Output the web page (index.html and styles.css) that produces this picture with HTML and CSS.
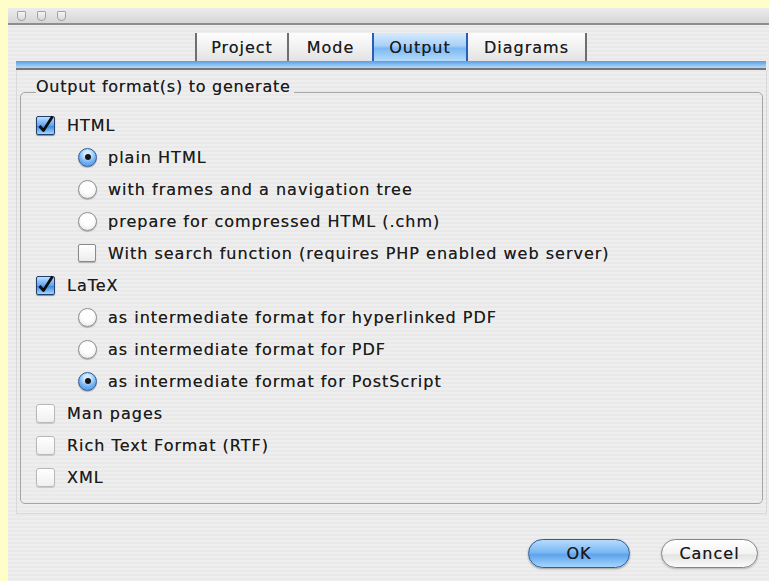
FILE: index.html
```html
<!DOCTYPE html>
<html>
<head>
<meta charset="utf-8">
<title>Doxygen Wizard</title>
<link rel="stylesheet" href="styles.css">
</head>
<body>
<div class="window">
  <div class="titlebar">
    <span class="light"></span><span class="light"></span><span class="light"></span>
  </div>

  <div class="tabs">
    <div class="tab t-project">Project</div>
    <div class="tab t-mode">Mode</div>
    <div class="tab t-output active">Output</div>
    <div class="tab t-diagrams last">Diagrams</div>
  </div>
  <div class="tabband"></div>

  <div class="panel">
    <fieldset class="group">
      <legend>Output format(s) to generate</legend>

      <div class="row"><span class="cb on"><svg viewBox="0 0 19 19" width="19" height="19"><path d="M3.5 10 L7.5 14.5 L16.5 0.5" /></svg></span><span class="label">HTML</span></div>
      <div class="row sub"><span class="radio on"></span><span class="label">plain HTML</span></div>
      <div class="row sub"><span class="radio"></span><span class="label">with frames and a navigation tree</span></div>
      <div class="row sub"><span class="radio"></span><span class="label">prepare for compressed HTML (.chm)</span></div>
      <div class="row sub"><span class="cb small"></span><span class="label">With search function (requires PHP enabled web server)</span></div>

      <div class="row"><span class="cb on"><svg viewBox="0 0 19 19" width="19" height="19"><path d="M3.5 10 L7.5 14.5 L16.5 0.5" /></svg></span><span class="label">LaTeX</span></div>
      <div class="row sub"><span class="radio"></span><span class="label">as intermediate format for hyperlinked PDF</span></div>
      <div class="row sub"><span class="radio"></span><span class="label">as intermediate format for PDF</span></div>
      <div class="row sub"><span class="radio on"></span><span class="label">as intermediate format for PostScript</span></div>

      <div class="row"><span class="cb off"></span><span class="label">Man pages</span></div>
      <div class="row"><span class="cb off"></span><span class="label">Rich Text Format (RTF)</span></div>
      <div class="row"><span class="cb off"></span><span class="label">XML</span></div>
    </fieldset>
  </div>

  <div class="buttons">
    <button class="btn ok">OK</button>
    <button class="btn cancel">Cancel</button>
  </div>
</div>
</body>
</html>
```

FILE: styles.css
```css
html, body {
  margin: 0;
  padding: 0;
}

body {
  background: #fffdc8;
  font-family: "DejaVu Sans", "Liberation Sans", sans-serif;
  font-size: 16px;
  color: #1c1c1c;
  overflow: hidden;
}

.window {
  margin: 8px 0 0 8px;
  width: 761px;
  height: 573px;
  background: repeating-linear-gradient(#eeeeee 0 2px, #e9e9e9 2px 4px);
  display: flex;
  flex-direction: column;
}

/* title bar with the three inactive window controls */
.titlebar {
  height: 15px;
  background: linear-gradient(#ececec, #d6d6d6);
  border-bottom: 2px solid #8d8d8d;
  display: flex;
  align-items: center;
  gap: 11px;
  padding-left: 9px;
}

.light {
  width: 7px;
  height: 8px;
  border: 1px solid #a3a3a3;
  border-radius: 1px 1px 4px 4px;
  background: linear-gradient(#f4f4f4, #d8d8d8);
}

/* tab strip */
.tabs {
  margin-top: 8px;
  height: 28px;
  display: flex;
  padding-left: 187px;
}

.tab {
  height: 28px;
  box-sizing: border-box;
  border-left: 2px solid #6f6f6f;
  background: linear-gradient(#fdfdfd, #f1f1f1 50%, #e2e2e2);
  display: flex;
  align-items: center;
  justify-content: center;
  letter-spacing: 1px;
  text-shadow: 0 0 0.5px rgba(0, 0, 0, 0.6);
}

.t-project { width: 92px; }
.t-mode { width: 85px; }
.t-output { width: 96px; }
.t-diagrams { width: 121px; }

.tab.last {
  border-right: 2px solid #6f6f6f;
}

.tab.active {
  border-left-color: #2a5cb8;
  border-right: 2px solid #2a5cb8;
  background: linear-gradient(#d6ebff, #a8d0f8 45%, #7cb9f2 55%, #b4dcfb);
  margin-right: -2px;
  position: relative;
}

.tabband {
  margin: 0 3px 0 8px;
  height: 7px;
  background: linear-gradient(#5c9be3, #86bdf0 50%, #b2dafb);
  border-bottom: 2px solid #767676;
}

/* content pane */
.panel {
  margin: 0 2px 0 8px;
  height: 434px;
  padding: 9px 3px 0 3px;
  border: 1px solid #d9d9d9;
  border-top: 0;
  display: flex;
  flex-direction: column;
}

.group {
  margin: 0;
  border: 1px solid #a6a6a6;
  border-radius: 5px;
  padding: 4px 0 10px 15px;
  min-width: 0;
}

.group legend {
  padding: 0 3px 10px 0;
  line-height: 16px;
  letter-spacing: 0.75px;
  text-shadow: 0 0 0.5px rgba(0, 0, 0, 0.6);
}

.row {
  height: 32px;
  display: flex;
  align-items: center;
}

.row.sub {
  padding-left: 42px;
}

.label {
  letter-spacing: 1px;
  white-space: nowrap;
  text-shadow: 0 0 0.5px rgba(0, 0, 0, 0.6);
}

/* checkboxes */
.cb {
  width: 19px;
  height: 19px;
  box-sizing: border-box;
  border-radius: 2px;
  margin-right: 12px;
  display: flex;
}

.cb svg {
  overflow: visible;
  margin: -1px;
}

.cb svg path {
  fill: none;
  stroke: #0f0f0f;
  stroke-width: 2.8;
  stroke-linejoin: round;
}

.cb.on {
  border: 1px solid #233f70;
  background: linear-gradient(#bfe0ff, #5ea6ee 50%, #3f8ce0 55%, #a2d6ff);
  box-shadow: 0 1px 1px rgba(0, 0, 0, 0.4);
}

.cb.off {
  border: 1px solid #b9b9b9;
  background: linear-gradient(#ffffff, #f0f0f0);
  box-shadow: 0 1px 1px rgba(0, 0, 0, 0.15);
  border-radius: 3px;
}

.cb.small {
  width: 18px;
  height: 18px;
  border: 1px solid #8a8a8a;
  background: linear-gradient(#ffffff, #ececec);
  box-shadow: 0 1px 1px rgba(0, 0, 0, 0.25);
  margin-right: 12px;
}

/* radio buttons */
.radio {
  width: 19px;
  height: 19px;
  box-sizing: border-box;
  border-radius: 50%;
  border: 1px solid #8c8c8c;
  background: radial-gradient(circle at 50% 35%, #ffffff 40%, #e4e4e4);
  box-shadow: 0 1px 1px rgba(0, 0, 0, 0.25);
  margin-right: 11px;
  display: flex;
  align-items: center;
  justify-content: center;
}

.radio.on {
  border-color: #2d5a9a;
  background: radial-gradient(circle at 50% 30%, #d4ecff 20%, #6cb0f2 60%, #4a90e0);
}

.radio.on::after {
  content: "";
  width: 6px;
  height: 6px;
  border-radius: 50%;
  background: #151515;
}

/* dialog buttons */
.buttons {
  margin-top: 25px;
  display: flex;
  justify-content: flex-end;
  gap: 31px;
  padding-right: 11px;
}

.btn {
  height: 29px;
  border-radius: 15px;
  font-family: "DejaVu Sans", "Liberation Sans", sans-serif;
  font-size: 16px;
  letter-spacing: 1px;
  color: #1a1a1a;
  padding: 0;
  text-shadow: 0 0 0.5px rgba(0, 0, 0, 0.6);
}

.btn.ok {
  width: 102px;
  border: 1px solid #2e5c9c;
  background: linear-gradient(#b6dcff, #7cb8f2 45%, #5ea3ec 55%, #a5d6ff);
  box-shadow: 0 1px 2px rgba(0, 0, 0, 0.35);
}

.btn.cancel {
  width: 97px;
  border: 1px solid #858585;
  background: linear-gradient(#ffffff, #f3f3f3 50%, #e4e4e4 55%, #fafafa);
  box-shadow: 0 1px 2px rgba(0, 0, 0, 0.25);
}
```
